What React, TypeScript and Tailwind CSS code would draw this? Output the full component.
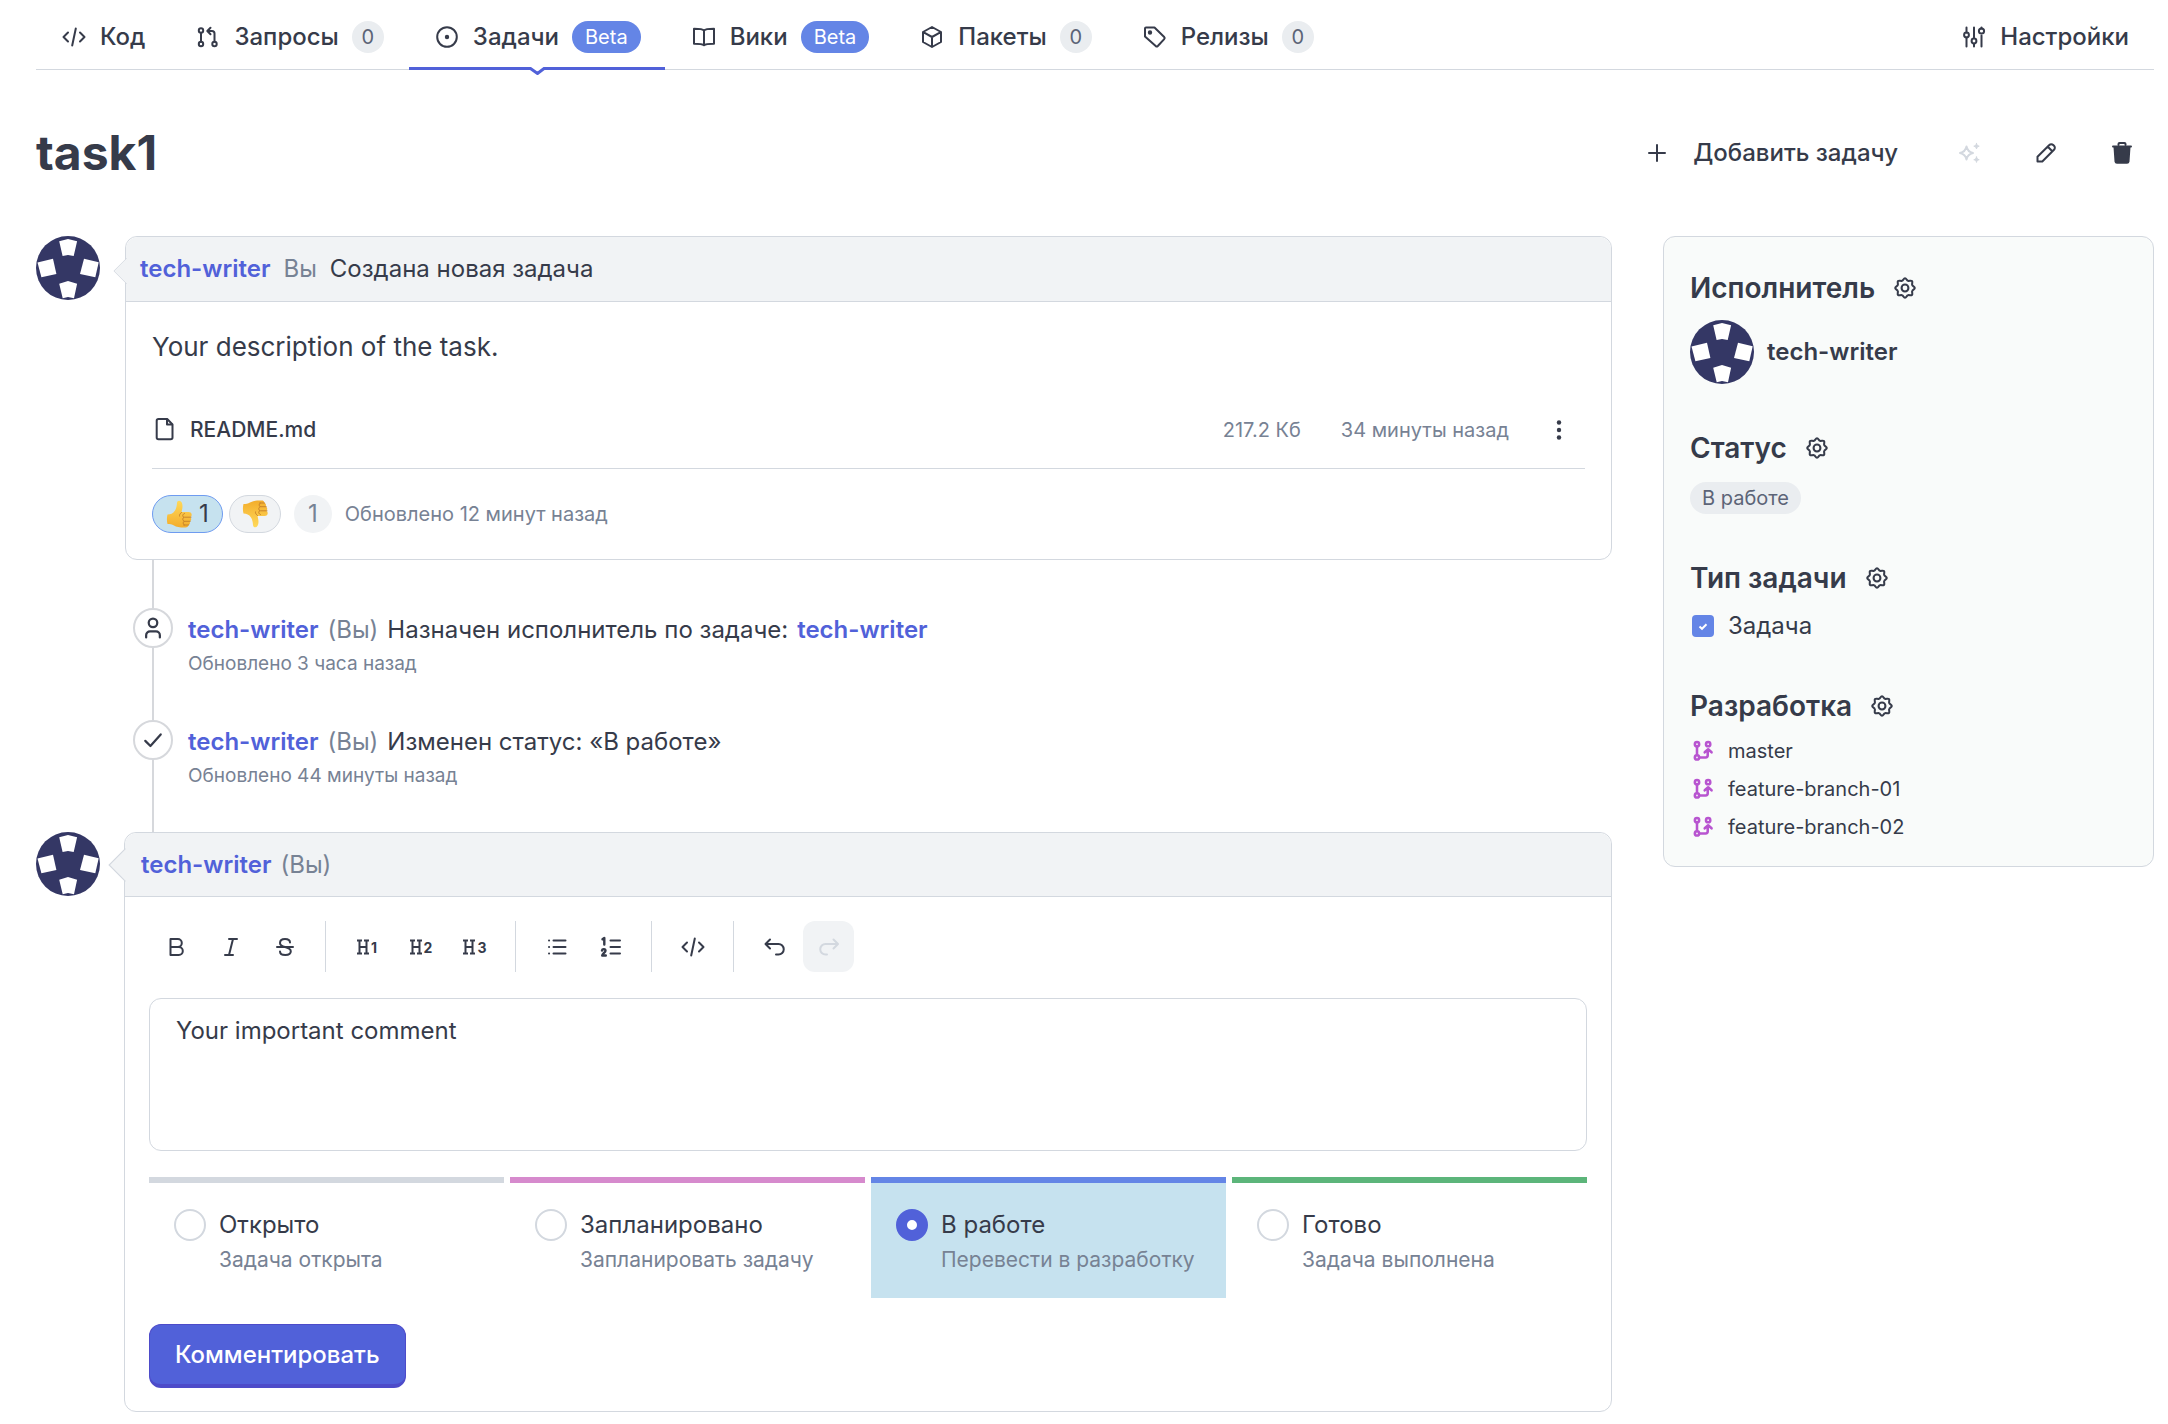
import React, { useState } from "react";

type IconProps = { className?: string };

const Svg = ({
  children,
  className = "size-7",
  width = 2,
}: {
  children: React.ReactNode;
  className?: string;
  width?: number;
}) => (
  <svg
    viewBox="0 0 28 28"
    fill="none"
    stroke="currentColor"
    strokeWidth={width}
    strokeLinecap="round"
    strokeLinejoin="round"
    className={`shrink-0 ${className}`}
    aria-hidden="true"
  >
    {children}
  </svg>
);

const CodeIcon = (props: IconProps) => (
  <Svg {...props}>
    <path d="M8 9.500 3.500 14 8 18.500M20 9.500l4.500 4.500-4.500 4.500M15.800 5.500l-3.600 17" />
  </Svg>
);

const PullIcon = () => (
  <Svg>
    <circle cx="7" cy="7.500" r="2.200" />
    <circle cx="7" cy="21" r="2.200" />
    <circle cx="20.500" cy="21" r="2.200" />
    <path d="M7 9.800v9M20.500 18.800V10.500a2.500 2.500 0 0 0-2.500-2.500h-4M16.500 4.800 13.300 8l3.200 3.200" />
  </Svg>
);

const IssueIcon = () => (
  <Svg>
    <circle cx="14" cy="14" r="9.800" />
    <circle cx="14" cy="14" r="1.200" fill="currentColor" />
  </Svg>
);

const BookIcon = () => (
  <Svg>
    <path d="M14 7.500C12.500 5.800 9 5.800 4 5.800v15c5 0 8.500 0 10 1.500C15.500 20.800 19 20.800 24 20.800v-15c-5 0-8.500 0-10 1.700zM14 7.500V22" />
  </Svg>
);

const BoxIcon = () => (
  <Svg>
    <path d="M14 4l9 5v10l-9 5-9-5V9zM5.300 9.200 14 14l8.700-4.800M14 14v10" />
  </Svg>
);

const TagIcon = () => (
  <Svg>
    <path d="M5 4.500h8.500L23.200 14a1.500 1.500 0 0 1 0 2.100L16.800 23a1.500 1.500 0 0 1-2.100 0L4 13.500V5.500a1 1 0 0 1 1-1z" />
    <circle cx="9" cy="9.500" r="1.200" fill="currentColor" />
  </Svg>
);

const SlidersIcon = () => (
  <Svg>
    <path d="M6.500 4.500v5M6.500 14.500v9M14 4.500v10M14 21v2.500M21.500 12.500v11" />
    <circle cx="6.500" cy="12" r="2.400" />
    <circle cx="14" cy="18" r="2.400" />
    <circle cx="21.500" cy="8" r="2.600" />
    <path d="M21.500 4.500v1" />
  </Svg>
);

const PlusIcon = () => (
  <Svg>
    <path d="M14 6v16M6 14h16" />
  </Svg>
);

const SparkleIcon = () => (
  <Svg>
    <path d="M10.500 7.500c.800 4 2.500 5.700 6.500 6.500-4 .800-5.700 2.500-6.500 6.500C9.700 16.500 8 14.800 4 14c4-.800 5.700-2.500 6.500-6.500z" />
    <path
      d="M20.500 4.500c.400 1.700 1 2.300 2.700 2.700-1.700.400-2.300 1-2.700 2.700-.400-1.700-1-2.300-2.700-2.700 1.700-.400 2.300-1 2.700-2.700zM20.500 18c.400 1.700 1 2.300 2.700 2.700-1.700.400-2.300 1-2.700 2.700-.400-1.700-1-2.300-2.700-2.700 1.700-.400 2.300-1 2.700-2.700z"
      fill="currentColor"
      strokeWidth="1"
    />
  </Svg>
);

const PencilIcon = () => (
  <Svg>
    <path d="M5.500 22.500v-4.800L17.300 6a2.700 2.700 0 0 1 3.900 0l.800.800a2.700 2.700 0 0 1 0 3.900L10.300 22.500zM15.800 7.700l4.500 4.500" />
  </Svg>
);

const TrashIcon = () => (
  <Svg>
    <path d="M10.500 6V5a1 1 0 0 1 1-1h5a1 1 0 0 1 1 1v1" />
    <path d="M5 7.500h18" />
    <path d="M6.500 8h15l-1 14.500a1.500 1.500 0 0 1-1.500 1.300H9a1.500 1.500 0 0 1-1.500-1.300z" fill="currentColor" />
  </Svg>
);

const GearIcon = () => (
  <Svg className="size-6" width={2.400}>
    <circle cx="14" cy="14" r="4" />
    <path d="M14 2.600C15.800 2.600 15.800 5.100 17.500 5.600C19.100 6.200 20.800 4.700 22.100 5.900C23.300 7.200 21.800 8.900 22.400 10.500C22.900 12.200 25.400 12.200 25.400 14C25.400 15.800 22.900 15.800 22.400 17.500C21.800 19.100 23.300 20.800 22.100 22.100C20.800 23.300 19.100 21.800 17.500 22.400C15.800 22.900 15.800 25.400 14 25.400C12.200 25.400 12.200 22.900 10.500 22.400C8.900 21.800 7.200 23.300 5.900 22.100C4.700 20.800 6.200 19.100 5.600 17.500C5.100 15.800 2.600 15.800 2.600 14C2.600 12.200 5.100 12.200 5.600 10.500C6.200 8.900 4.700 7.200 5.900 5.900C7.200 4.700 8.900 6.200 10.500 5.600C12.200 5.100 12.200 2.600 14 2.600z" />
  </Svg>
);

const FileIcon = () => (
  <Svg>
    <path d="M6.500 4h8.700l5.300 5.500v13a1.800 1.800 0 0 1-1.800 1.800H6.500a1.800 1.800 0 0 1-1.800-1.800V5.800A1.800 1.800 0 0 1 6.500 4z" />
    <path d="M15 4.500v5h5" />
  </Svg>
);

const BranchIcon = () => (
  <Svg className="size-6 text-[#b855d0]" width={3}>
    <circle cx="7" cy="6" r="2.500" />
    <circle cx="20" cy="6" r="2.500" />
    <circle cx="7" cy="21.500" r="2.500" />
    <path d="M7 9v9.500M10 21.500h7a2.500 2.500 0 0 0 2.500-2.500V12.500M16 15.500l4-3.500 4 3.500" />
  </Svg>
);

const Avatar = () => (
  <svg viewBox="0 0 64 64" className="size-16 shrink-0" role="img" aria-label="tech-writer">
    <circle cx="32" cy="32" r="32" fill="#343765" />
    <g fill="#fff">
      <path d="M23.200 5.300 32 3l9.100 2.300L37.700 20 32 19l-5.400 1z" />
      <path d="M23.200 47.700 32 45l9.100 2.700L38 62.300 32 61l-5.300 1.300z" />
      <path d="M1.500 26.500 17 22.700 20.400 38 5.400 41.300z" />
      <path d="M48 22.700l14.700 3.600-3.400 15L44 38z" />
    </g>
  </svg>
);

const Thumb = ({ down = false }: { down?: boolean }) => (
  <svg viewBox="0 0 26 28" className={down ? "h-7 w-[26px] -scale-y-100" : "h-7 w-[26px]"} aria-hidden="true">
    <defs>
      <linearGradient id="skin" x1="0" y1="0" x2="0" y2="1">
        <stop offset="0" stopColor="#ffd95a" />
        <stop offset="1" stopColor="#f3ad2c" />
      </linearGradient>
    </defs>
    <path
      d="M1.500 14.500c3 0 5.500-1 7.500-4 1.300-2 1.800-4.500 2-7.500.1-1.500 1-2.300 2.200-2.300 2 0 3.300 2.300 3.300 5.300 0 2.500-.6 4.500-1 6h7c2.200 0 3.200 1.300 3.200 2.800 0 1.200-.7 2-1.500 2.400.9.500 1.200 1.400 1 2.400-.2 1.100-.9 1.700-1.700 2 .5.600.6 1.300.3 2.100-.3.900-1 1.300-1.700 1.500.2 1.600-.8 2.300-2.600 2.300-6.500 0-9-.5-11.500-2-2-1.200-4-1.500-6.500-1.500-.8-3-.8-6.500 0-9.500z"
      fill="url(#skin)"
    />
    <path
      d="M15.500 12.500c-1.500 1-2.300 2.300-2 3.600M25 17.200h-6.500M24.200 21.300h-6M22.600 25h-5M18.500 13.500c-2 .5-2.500 3-.5 3.700-1.800.8-1.600 3.400.2 4.100-1.500.9-1.300 3.100.2 3.700"
      fill="none"
      stroke="#c9842a"
      strokeWidth="1"
      strokeLinecap="round"
    />
  </svg>
);

const Beta = () => (
  <span className="ml-px flex h-8 items-center rounded-full bg-[#6485e6] px-[13px] text-xl font-normal text-white">Beta</span>
);

const Count = () => (
  <span className="ml-px flex h-8 w-8 items-center justify-center rounded-full bg-[#eaedf0] text-xl font-normal text-[#5c6477]">
    0
  </span>
);

const tabs = [
  { name: "Код", icon: <CodeIcon />, badge: null },
  { name: "Запросы", icon: <PullIcon />, badge: <Count /> },
  { name: "Задачи", icon: <IssueIcon />, badge: <Beta />, active: true },
  { name: "Вики", icon: <BookIcon />, badge: <Beta /> },
  { name: "Пакеты", icon: <BoxIcon />, badge: <Count /> },
  { name: "Релизы", icon: <TagIcon />, badge: <Count /> },
];

const NavBar = () => (
  <nav className="flex h-[70px] justify-between border-b border-[#d3d8df] text-2xl font-medium">
    <div className="flex gap-px">
      {tabs.map((tab) => (
        <a key={tab.name} href="#" className="relative flex items-center gap-3 px-6 pt-1">
          {tab.icon}
          {tab.name}
          {tab.badge}
          {tab.active && (
            <span className="absolute inset-x-0 -bottom-px h-[3px] bg-[#5161d9]">
              <svg viewBox="0 0 18 8" className="absolute top-0 left-1/2 -ml-2 h-2 w-[18px]" aria-hidden="true">
                <path d="M0 0h17v3H0z" fill="#fff" />
                <path d="M0 1.500h1.500L8.500 6.500l6.500-5h2" fill="none" stroke="#5161d9" strokeWidth="3" />
              </svg>
            </span>
          )}
        </a>
      ))}
    </div>
    <a href="#" className="flex items-center gap-3 px-[25px] pt-1">
      <SlidersIcon />
      Настройки
    </a>
  </nav>
);

const TitleRow = () => (
  <header className="flex h-[166px] items-center justify-between">
    <h1 className="text-5xl font-bold">task1</h1>
    <div className="flex gap-3">
      <button type="button" className="flex h-16 items-center gap-[22px] px-7 text-2xl font-medium">
        <PlusIcon />
        Добавить задачу
      </button>
      <button
        type="button"
        disabled
        aria-label="AI"
        className="flex size-16 items-center justify-center text-[#d3d8df]"
      >
        <SparkleIcon />
      </button>
      <button type="button" aria-label="Редактировать" className="flex size-16 items-center justify-center">
        <PencilIcon />
      </button>
      <button type="button" aria-label="Удалить" className="flex size-16 items-center justify-center">
        <TrashIcon />
      </button>
    </div>
  </header>
);

// little arrow that points from the card to the avatar
const Pointer = ({ className }: { className: string }) => (
  <svg viewBox="0 0 16 32" className={`absolute ${className}`} aria-hidden="true">
    <path d="M16 1 1 16l15 15z" fill="#f1f3f5" />
    <path d="M15.500 1.500 1 16l14.500 14.500" fill="none" stroke="#d3d8df" />
  </svg>
);

const Author = () => (
  <a href="#" className="font-semibold text-[#5161d9]">
    tech-writer
  </a>
);

const TaskCard = () => (
  <article className="flex gap-[25px]">
    <Avatar />
    <div className="relative min-w-0 flex-1 rounded-xl border border-[#d3d8df]">
      <div className="flex h-[65px] items-center gap-[13px] rounded-t-xl border-b border-[#d3d8df] bg-[#f1f3f5] px-3.5 text-2xl">
        <Pointer className="top-5 -left-[13px] h-7 w-3.5" />
        <Author />
        <span className="text-[#778294]">Вы</span>
        <span>Создана новая задача</span>
      </div>
      <div className="px-[26px] pt-[25px] pb-[26px]">
        <p className="text-[26px] leading-10">Your description of the task.</p>
        <div className="mt-6 flex h-[78px] items-center border-b border-[#d3d8df] text-xl text-[#778294]">
          <a href="#" className="flex items-center gap-2.5 text-[21px] font-medium text-[#363b4a]">
            <FileIcon />
            README.md
          </a>
          <span className="ml-auto">217.2 Кб</span>
          <span className="ml-10">34 минуты назад</span>
          <button type="button" aria-label="Меню" className="ml-6 flex size-[52px] items-center justify-center text-[#363b4a]">
            <svg viewBox="0 0 28 28" className="size-7" fill="currentColor" aria-hidden="true">
              <circle cx="14" cy="6.500" r="2.200" />
              <circle cx="14" cy="14" r="2.200" />
              <circle cx="14" cy="21.500" r="2.200" />
            </svg>
          </button>
        </div>
        <div className="mt-[26px] flex items-center text-xl text-[#778294]">
          <button
            type="button"
            className="flex h-[38px] items-center gap-[7px] rounded-full border border-[#6e9bf0] bg-[#c6e2ef] px-[13px] text-2xl text-[#363b4a]"
          >
            <Thumb />1
          </button>
          <button
            type="button"
            aria-label="Не нравится"
            className="ml-1.5 flex h-[38px] items-center rounded-full border border-[#d3d8df] bg-[#f1f3f5] px-3"
          >
            <Thumb down />
          </button>
          <span className="ml-[13px] flex size-[38px] items-center justify-center rounded-full bg-[#f1f3f5] text-2xl">1</span>
          <span className="ml-[13px]">Обновлено 12 минут назад</span>
        </div>
      </div>
    </div>
  </article>
);

const TimelineItem = ({
  icon,
  time,
  children,
}: {
  icon: React.ReactNode;
  time: string;
  children: React.ReactNode;
}) => (
  <li className="-ml-[21px] flex h-28 gap-[15px]">
    <span className="flex size-10 shrink-0 items-center justify-center rounded-full border-2 border-[#d6d8dc] bg-white">
      {icon}
    </span>
    <div className="pt-1.5">
      <p className="flex flex-wrap gap-x-[9px] text-2xl">
        <Author />
        <span className="text-[#778294]">(Вы)</span>
        {children}
      </p>
      <p className="mt-1 text-[19px] leading-7 text-[#778294]">{time}</p>
    </div>
  </li>
);

const Timeline = () => (
  <ol className="ml-[116px] border-l-2 border-[#d6d8dc] pt-12">
    <TimelineItem
      time="Обновлено 3 часа назад"
      icon={
        <Svg className="size-6" width={2.600}>
          <circle cx="14" cy="8" r="5" />
          <path d="M6 25v-2.500a4.500 4.500 0 0 1 4.500-4.500h7a4.500 4.500 0 0 1 4.500 4.500V25" />
        </Svg>
      }
    >
      <span>Назначен исполнитель по задаче:</span>
      <Author />
    </TimelineItem>
    <TimelineItem
      time="Обновлено 44 минуты назад"
      icon={
        <Svg className="size-6" width={2.600}>
          <path d="M5 15l6 6L23 7.500" />
        </Svg>
      }
    >
      <span>Изменен статус: «В работе»</span>
    </TimelineItem>
  </ol>
);

const Heading = ({ level }: { level: number }) => (
  <span className="flex items-end gap-px">
    <svg viewBox="0 0 14 16" className="h-4 w-3.5" fill="none" stroke="currentColor" strokeWidth="2" aria-hidden="true">
      <path d="M3.500 1v14M10.500 1v14M3.500 8h7M1 1.500h5M8 1.500h5M1 14.500h5M8 14.500h5" />
    </svg>
    <span className="text-sm leading-[14px] font-bold">{level}</span>
  </span>
);

const toolbar = [
  [
    {
      name: "Жирный",
      icon: (
        <Svg>
          <path d="M7.500 6h7.300a4 4 0 0 1 0 8H7.500zM7.500 14h8.300a4 4 0 0 1 0 8H7.500z" />
        </Svg>
      ),
    },
    {
      name: "Курсив",
      icon: (
        <Svg>
          <path d="M12 6h8M8 22h8M16 6l-4 16" />
        </Svg>
      ),
    },
    {
      name: "Зачеркнутый",
      icon: (
        <Svg>
          <path d="M6 14h16M19 9.500C19 7.300 17 6 14 6s-5 1.500-5 4c0 2.200 1.500 3.200 5 4 4 1 5.800 2 5.800 4.300S17.500 22 14.300 22 9 20.500 9 18.500" />
        </Svg>
      ),
    },
  ],
  [
    { name: "Заголовок 1", icon: <Heading level={1} /> },
    { name: "Заголовок 2", icon: <Heading level={2} /> },
    { name: "Заголовок 3", icon: <Heading level={3} /> },
  ],
  [
    {
      name: "Список",
      icon: (
        <Svg>
          <path d="M10.500 7.500H22.500M10.500 14H22.500M10.500 20.500H22.500M6 7.500h.1M6 14h.1M6 20.500h.1" />
        </Svg>
      ),
    },
    {
      name: "Нумерованный список",
      icon: (
        <Svg>
          <path d="M13.500 7.500H23M13.500 14H23M13.500 20.500H23" />
          <path d="M5.500 6.300 7.300 5v6.500M5 17.500c.300-2 3.500-1.800 3.500.200 0 1.600-3.300 2.800-3.300 4.800h3.600" strokeWidth="2.400" />
        </Svg>
      ),
    },
  ],
  [{ name: "Код", icon: <CodeIcon /> }],
  [
    {
      name: "Отменить",
      icon: (
        <Svg>
          <path d="M9 6.500 4.500 11 9 15.500M5 11h12.500a5.200 5.200 0 0 1 0 10.500H15" />
        </Svg>
      ),
    },
    {
      name: "Повторить",
      disabled: true,
      icon: (
        <Svg>
          <path d="M18.500 6.500 23 11l-4.500 4.500M22.500 11H10.500a5.200 5.200 0 0 0 0 10.500H12" />
        </Svg>
      ),
    },
  ],
];

const Toolbar = () => (
  <div role="toolbar" className="flex h-[51px] pl-0.5">
    {toolbar.map((group, i) => (
      <div
        key={i}
        className={i === 0 ? "flex gap-[3px] pr-[15px]" : "flex gap-[3px] border-l border-[#d3d8df] px-[15px]"}
      >
        {group.map((item: { name: string; icon: React.ReactNode; disabled?: boolean }) => (
          <button
            key={item.name}
            type="button"
            aria-label={item.name}
            disabled={item.disabled}
            className="flex h-full w-[51px] items-center justify-center rounded-xl disabled:bg-[#f1f3f5] disabled:text-[#d3d8df]"
          >
            {item.icon}
          </button>
        ))}
      </div>
    ))}
  </div>
);

const statuses = [
  { value: "open", name: "Открыто", hint: "Задача открыта", bar: "border-[#d3d8df]" },
  { value: "planned", name: "Запланировано", hint: "Запланировать задачу", bar: "border-[#d68acd]" },
  { value: "work", name: "В работе", hint: "Перевести в разработку", bar: "border-[#6485e6]" },
  { value: "done", name: "Готово", hint: "Задача выполнена", bar: "border-[#5cb57a]" },
];

const CommentForm = () => {
  const [status, setStatus] = useState("work");
  const [text, setText] = useState("Your important comment");

  return (
    <article className="flex gap-6">
      <Avatar />
      <form className="relative min-w-0 flex-1 rounded-xl border border-[#d3d8df]">
        <div className="flex h-16 items-center gap-[9px] rounded-t-xl border-b border-[#d3d8df] bg-[#f1f3f5] px-4 text-2xl">
          <Pointer className="top-3.5 -left-[17px] h-9 w-[18px]" />
          <Author />
          <span className="text-[#778294]">(Вы)</span>
        </div>
        <div className="flex flex-col gap-[26px] px-6 pt-6 pb-[23px]">
          <Toolbar />
          <textarea
            aria-label="Комментарий"
            value={text}
            onChange={(e) => setText(e.target.value)}
            className="block h-[153px] w-full resize-none rounded-xl border border-[#d3d8df] px-[26px] py-4 text-2xl"
          />
          <div className="grid grid-cols-4 gap-1.5">
            {statuses.map((item) => (
              <label
                key={item.value}
                className={`flex gap-[13px] border-t-6 px-[25px] pt-[26px] pb-6 ${item.bar} ${
                  item.value === status ? "bg-[#c6e2ef]" : ""
                }`}
              >
                <input
                  type="radio"
                  name="status"
                  checked={item.value === status}
                  onChange={() => setStatus(item.value)}
                  className="size-8 shrink-0 appearance-none rounded-full border-2 border-[#d3d8df] bg-white checked:border-[11px] checked:border-[#5161d9]"
                />
                <span>
                  <span className="block text-2xl">{item.name}</span>
                  <span className="mt-[5px] block text-[21px] leading-7 text-[#778294]">{item.hint}</span>
                </span>
              </label>
            ))}
          </div>
          <button
            type="button"
            className="h-16 self-start rounded-xl border border-b-4 border-[#4d4bc9] bg-[#5161d9] px-[25px] text-2xl font-medium text-white"
          >
            Комментировать
          </button>
        </div>
      </form>
    </article>
  );
};

const Section = ({ title, children }: { title: string; children: React.ReactNode }) => (
  <section>
    <div className="flex items-center gap-[18px]">
      <h2 className="text-[28px] leading-9 font-semibold">{title}</h2>
      <button type="button" aria-label={title}>
        <GearIcon />
      </button>
    </div>
    {children}
  </section>
);

const Sidebar = () => (
  <aside className="flex w-[491px] shrink-0 flex-col gap-[46px] rounded-xl border border-[#d3d8df] bg-[#f9fbfa] px-[26px] pt-[33px] pb-5">
    <Section title="Исполнитель">
      <a href="#" className="mt-3.5 flex items-center gap-[13px] text-2xl font-semibold">
        <Avatar />
        tech-writer
      </a>
    </Section>
    <Section title="Статус">
      <span className="mt-4 flex h-8 w-fit items-center rounded-full bg-[#eaedf0] px-3 text-xl text-[#5c6477]">
        В работе
      </span>
    </Section>
    <Section title="Тип задачи">
      <label className="mt-3.5 flex items-center gap-3.5 pl-0.5 text-2xl">
        <span className="relative flex">
          <input type="checkbox" defaultChecked className="size-[22px] appearance-none rounded bg-[#6485e6]" />
          <svg viewBox="0 0 22 22" className="pointer-events-none absolute inset-0" aria-hidden="true">
            <path d="M7.500 11.500 10 13.800l4.500-4.500" fill="none" stroke="#fff" strokeWidth="2" />
          </svg>
        </span>
        Задача
      </label>
    </Section>
    <Section title="Разработка">
      <ul className="mt-2 text-xl">
        {["master", "feature-branch-01", "feature-branch-02"].map((branch) => (
          <li key={branch}>
            <a href="#" className="flex h-[38px] items-center gap-[13px] pl-px">
              <BranchIcon />
              {branch}
            </a>
          </li>
        ))}
      </ul>
    </Section>
  </aside>
);

const App = (): React.ReactElement => {
  return (
    <div className="min-h-screen bg-white pr-3.5 pl-9 font-['Inter',sans-serif] text-[#363b4a]">
      <NavBar />
      <TitleRow />
      <div className="flex items-start gap-[51px] pb-3">
        <main className="min-w-0 flex-1">
          <TaskCard />
          <Timeline />
          <CommentForm />
        </main>
        <Sidebar />
      </div>
    </div>
  );
};

export default App;
